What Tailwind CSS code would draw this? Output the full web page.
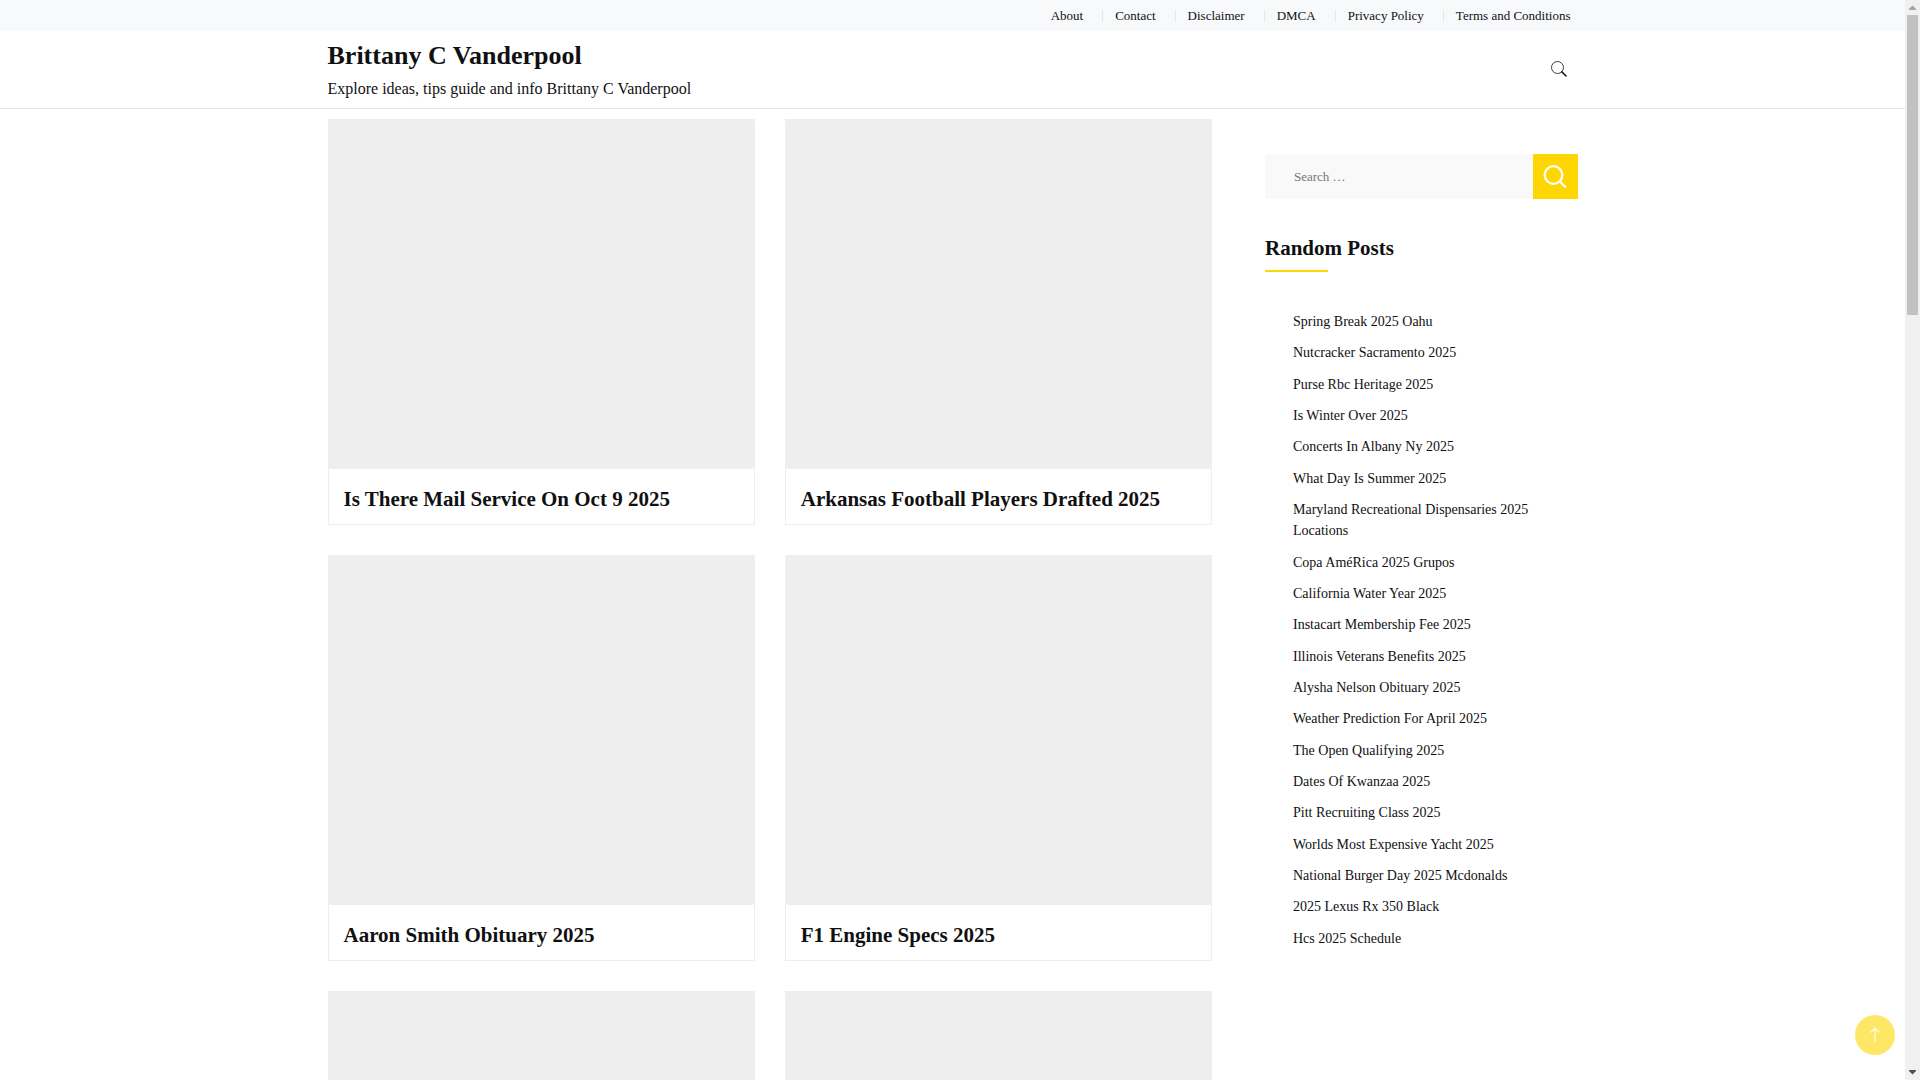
<!DOCTYPE html>
<html lang="en">
<head>
<meta charset="utf-8">
<meta name="viewport" content="width=device-width, initial-scale=1">
<title>Brittany C Vanderpool</title>
<script src="https://cdn.jsdelivr.net/npm/@tailwindcss/browser@4"></script>
</head>
<body class="flex h-screen overflow-hidden bg-white font-['Liberation_Serif',serif] text-[#101011]">
<div class="min-w-0 flex-1">
  <nav aria-label="Top" class="bg-[#f8f9fb]">
    <ul class="mx-auto flex h-[31px] max-w-[1250px] items-center justify-end pr-[7px] text-[13px] leading-5">
      <li class="pr-[19px]"><a href="#">About</a></li>
      <li class="flex items-center pr-[19px]"><span class="mr-3 h-3 w-px bg-[#e6e6e6]"></span><a href="#">Contact</a></li>
      <li class="flex items-center pr-[19px]"><span class="mr-3 h-3 w-px bg-[#e6e6e6]"></span><a href="#">Disclaimer</a></li>
      <li class="flex items-center pr-[19px]"><span class="mr-3 h-3 w-px bg-[#e6e6e6]"></span><a href="#">DMCA</a></li>
      <li class="flex items-center pr-[19px]"><span class="mr-3 h-3 w-px bg-[#e6e6e6]"></span><a href="#">Privacy Policy</a></li>
      <li class="flex items-center"><span class="mr-3 h-3 w-px bg-[#e6e6e6]"></span><a href="#">Terms and Conditions</a></li>
    </ul>
  </nav>

  <header class="border-b border-[#e6e6e6]">
    <div class="mx-auto flex h-[77px] max-w-[1250px] items-center justify-between">
      <div>
        <h1 class="text-[26px] leading-[39px] font-bold"><a href="#">Brittany C Vanderpool</a></h1>
        <p class="py-[2px] text-base leading-6">Explore ideas, tips guide and info Brittany C Vanderpool</p>
      </div>
      <button type="button" aria-label="Open search" class="mr-[11px] pb-[2px]">
        <svg class="size-4" viewBox="0 0 16 16" fill="none" stroke="#101011"><circle cx="6.5" cy="6.5" r="6" stroke-width="0.8"/><path d="M10.8 10.8 15 15" stroke-width="1.6" stroke-linecap="round"/></svg>
      </button>
    </div>
  </header>

  <div class="mx-auto flex max-w-[1250px] gap-[53px] pt-[10px]">
    <main class="grid flex-1 grid-cols-2 content-start gap-[30px]">
      <article class="border border-[#eee]">
        <div class="h-[349px] rounded-xs bg-[#eee]"></div>
        <h2 class="px-[15px] pt-[14px] pb-[9px] text-[21px] leading-8 font-bold"><a href="#">Is There Mail Service On Oct 9 2025</a></h2>
      </article>
      <article class="border border-[#eee]">
        <div class="h-[349px] rounded-xs bg-[#eee]"></div>
        <h2 class="px-[15px] pt-[14px] pb-[9px] text-[21px] leading-8 font-bold"><a href="#">Arkansas Football Players Drafted 2025</a></h2>
      </article>
      <article class="border border-[#eee]">
        <div class="h-[349px] rounded-xs bg-[#eee]"></div>
        <h2 class="px-[15px] pt-[14px] pb-[9px] text-[21px] leading-8 font-bold"><a href="#">Aaron Smith Obituary 2025</a></h2>
      </article>
      <article class="border border-[#eee]">
        <div class="h-[349px] rounded-xs bg-[#eee]"></div>
        <h2 class="px-[15px] pt-[14px] pb-[9px] text-[21px] leading-8 font-bold"><a href="#">F1 Engine Specs 2025</a></h2>
      </article>
      <article class="border border-[#eee]">
        <div class="h-[349px] rounded-xs bg-[#eee]"></div>
      </article>
      <article class="border border-[#eee]">
        <div class="h-[349px] rounded-xs bg-[#eee]"></div>
      </article>
    </main>

    <aside class="w-1/4 pt-[35px]">
      <form class="flex h-[45px]" role="search">
        <input type="search" aria-label="Search" placeholder="Search …" class="min-w-0 flex-1 bg-[#f9f9f9] px-[29px] text-[13px] outline-none placeholder:text-[#757575]">
        <button type="submit" aria-label="Search" class="flex w-[45px] items-center justify-center bg-[#ffd700]">
          <svg class="size-6" viewBox="0 0 24 24" fill="none" stroke="#fff" stroke-width="2.3"><circle cx="10.500" cy="10" r="8.800"/><path d="M16.800 16.500 23 22.500"/></svg>
        </button>
      </form>
      <h2 class="pt-[33px] text-[21px] leading-8 font-bold">Random Posts</h2>
      <div class="mt-[6px] h-[2px] w-1/5 bg-[#ffd700]"></div>
      <ul class="mt-[39px] flex h-[638px] flex-col justify-between pl-7 text-sm leading-[21px]">
        <li><a href="#">Spring Break 2025 Oahu</a></li>
        <li><a href="#">Nutcracker Sacramento 2025</a></li>
        <li><a href="#">Purse Rbc Heritage 2025</a></li>
        <li><a href="#">Is Winter Over 2025</a></li>
        <li><a href="#">Concerts In Albany Ny 2025</a></li>
        <li><a href="#">What Day Is Summer 2025</a></li>
        <li><a href="#">Maryland Recreational Dispensaries 2025 Locations</a></li>
        <li><a href="#">Copa AméRica 2025 Grupos</a></li>
        <li><a href="#">California Water Year 2025</a></li>
        <li><a href="#">Instacart Membership Fee 2025</a></li>
        <li><a href="#">Illinois Veterans Benefits 2025</a></li>
        <li><a href="#">Alysha Nelson Obituary 2025</a></li>
        <li><a href="#">Weather Prediction For April 2025</a></li>
        <li><a href="#">The Open Qualifying 2025</a></li>
        <li><a href="#">Dates Of Kwanzaa 2025</a></li>
        <li><a href="#">Pitt Recruiting Class 2025</a></li>
        <li><a href="#">Worlds Most Expensive Yacht 2025</a></li>
        <li><a href="#">National Burger Day 2025 Mcdonalds</a></li>
        <li><a href="#">2025 Lexus Rx 350 Black</a></li>
        <li><a href="#">Hcs 2025 Schedule</a></li>
      </ul>
    </aside>
  </div>
</div>

<!-- Scroll track -->
<div aria-hidden="true" class="flex w-[15px] shrink-0 flex-col items-center bg-[#f0f0f0]">
  <svg class="h-[15px] w-[15px] shrink-0" viewBox="0 0 15 15" fill="#a3a3a3"><path d="M4 10h7V9L7.500 5.500 4 9z"/></svg>
  <div class="h-[300px] w-[11px] bg-[#c1c1c1]"></div>
  <svg class="mt-auto h-[15px] w-[15px] shrink-0" viewBox="0 0 15 15" fill="#505050"><path d="M4 5h7v1L7.500 9.500 4 6z"/></svg>
</div>

<a href="#" aria-label="Back to top" class="fixed right-[25px] bottom-[25px] flex size-10 items-center justify-center rounded-full bg-[#ffd700] opacity-60">
  <svg class="size-4" viewBox="0 0 16 16" fill="none" stroke="#fff" stroke-opacity="0.8" stroke-width="1.300"><path d="M8 15V1.500M3.500 5.500 8 1.200 12.500 5.500"/></svg>
</a>
</body>
</html>
